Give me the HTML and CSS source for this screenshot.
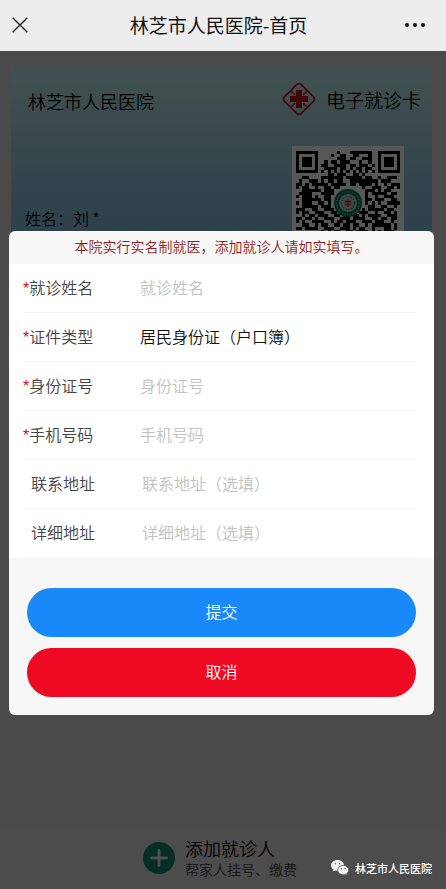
FILE: index.html
```html
<!DOCTYPE html>
<html lang="zh-CN">
<head>
<meta charset="utf-8">
<meta name="viewport" content="width=device-width, initial-scale=1">
<title>林芝市人民医院-首页</title>
<link rel="stylesheet" href="styles.css">
</head>
<body>
<header class="topbar">
  <button class="icon-button" type="button" aria-label="关闭">
    <svg width="16" height="16" viewBox="0 0 16 16" fill="none" stroke="#222" stroke-width="1.4"><path d="M.7 .7 15.3 15.3M15.3 .7.7 15.3"/></svg>
  </button>
  <h1 class="topbar-title">林芝市人民医院-首页</h1>
  <button class="icon-button icon-button-end" type="button" aria-label="更多">
    <svg width="20" height="6" viewBox="0 0 20 6" fill="#111"><circle cx="2" cy="3" r="2"/><circle cx="10" cy="3" r="2"/><circle cx="18" cy="3" r="2"/></svg>
  </button>
</header>
<div class="screen">
  <main class="home">
    <section class="card">
      <div class="card-head">
        <h2 class="card-hospital">林芝市人民医院</h2>
        <svg class="card-logo" width="34" height="34" viewBox="0 0 34 34" fill="none" stroke="#c8101c">
          <path d="M15 2.3Q17 .8 19 2.3L31.7 15Q33.200 17 31.700 19L19 31.700Q17 33.200 15 31.700L2.300 19Q.8 17 2.300 15Z" stroke-width="1.700"/>
          <path d="M8.500 8.500 13 13M25.500 8.500 21 13M8.500 25.500 13 21M25.500 25.500 21 21" stroke-width="1.500"/>
          <path d="M14 8h6v6h6v6h-6v6h-6v-6H8v-6h6z" fill="#c8101c" stroke="none"/>
        </svg>
        <span class="card-kind">电子就诊卡</span>
      </div>
      <div class="card-body">
        <p class="card-name">姓名：刘 *</p>
        <div class="qr">
          <svg id="qr" class="qr-code" viewBox="0 0 33 33" shape-rendering="crispEdges" role="img" aria-label="就诊二维码"></svg>
          <svg class="qr-badge" viewBox="0 0 28 28" fill="none">
            <circle cx="14" cy="14" r="14" fill="#007c57"/>
            <circle cx="14" cy="14" r="11.500" stroke="#6ba890" stroke-width="1.500" stroke-dasharray="1.500 1"/>
            <circle cx="14" cy="14" r="9" fill="#d2d2d2"/>
            <circle cx="14" cy="14" r="6.500" stroke="#64917f" stroke-width="1.500" stroke-dasharray="2 .7"/>
            <circle cx="14" cy="14" r="4" fill="#c99a9a"/>
            <path d="M14 10v8M11 12.500h6M11.500 15.500h5" stroke="#744" stroke-width="1"/>
          </svg>
        </div>
      </div>
    </section>
  </main>
  <footer class="add-bar">
    <a class="add-link" href="#add">
      <svg width="32" height="32" viewBox="0 0 32 32"><circle cx="16" cy="16" r="16" fill="#128769"/><path d="M16 8.500v15M8.500 16h15" stroke="#e6e6e6" stroke-width="2.800" stroke-linecap="round"/></svg>
      <span class="add-text"><span class="add-title">添加就诊人</span><span class="add-note">帮家人挂号、缴费</span></span>
    </a>
  </footer>
  <div class="overlay">
    <form class="dialog" role="dialog" aria-label="添加就诊人">
      <p class="notice">本院实行实名制就医，添加就诊人请如实填写。</p>
      <div class="fields">
        <div class="field"><label for="name"><b>*</b>就诊姓名</label><input id="name" type="text" placeholder="就诊姓名"></div>
        <div class="field"><label for="type"><b>*</b>证件类型</label><select id="type"><option>居民身份证（户口簿）</option></select></div>
        <div class="field"><label for="idno"><b>*</b>身份证号</label><input id="idno" type="text" placeholder="身份证号"></div>
        <div class="field"><label for="phone"><b>*</b>手机号码</label><input id="phone" type="tel" placeholder="手机号码"></div>
        <div class="field field-optional"><label for="area">联系地址</label><input id="area" type="text" placeholder="联系地址（选填）"></div>
        <div class="field field-optional"><label for="address">详细地址</label><input id="address" type="text" placeholder="详细地址（选填）"></div>
      </div>
      <div class="actions">
        <button class="action submit" type="button">提交</button>
        <button class="action cancel" type="button">取消</button>
      </div>
    </form>
  </div>
  <div class="watermark">
    <svg width="18" height="16" viewBox="0 0 18 16">
      <path fill="#f4f4f4" d="M6.500 0C2.900 0 0 2.400 0 5.400c0 1.700 1 3.200 2.400 4.200l-.6 2 2.200-1.200c.8.3 1.600.4 2.500.4C10 10.800 13 8.400 13 5.400S10.100 0 6.500 0z"/>
      <path fill="#f4f4f4" stroke="#505050" stroke-width=".8" d="M12.200 5.400c-3.100 0-5.500 2-5.500 4.700s2.400 4.700 5.500 4.700c.7 0 1.400-.1 2-.3l1.900 1.100-.5-1.800c1.300-.9 2.100-2.200 2.100-3.700 0-2.700-2.400-4.700-5.500-4.700z"/>
      <g fill="#505050"><circle cx="4.400" cy="3.800" r=".8"/><circle cx="8.600" cy="3.800" r=".8"/><circle cx="10.400" cy="8.800" r=".7"/><circle cx="14" cy="8.800" r=".7"/></g>
    </svg>
    <span>林芝市人民医院</span>
  </div>
</div>
<script src="qr.js"></script>
</body>
</html>
```
FILE: styles.css
```css
* { box-sizing: border-box; }
body {
  margin: 0;
  min-height: 100vh;
  display: flex;
  flex-direction: column;
  font-family: "Noto Sans CJK SC", sans-serif;
  font-weight: 350;
  font-size: 16px;
  color: #000;
}
h1, h2, p { margin: 0; font-weight: inherit; }
button, input, select { font: inherit; border: 0; margin: 0; }

.topbar {
  height: 51px;
  padding: 0 21px 2px 12px;
  display: grid;
  grid-template-columns: 60px 1fr 60px;
  align-items: center;
  background: #ededed;
  color: #111;
}
.icon-button { display: flex; padding: 0; background: none; }
.icon-button-end { justify-content: flex-end; }
.topbar-title { font-size: 19px; font-weight: 400; line-height: 28px; text-align: center; white-space: nowrap; }

.screen {
  position: relative;
  flex: 1;
  display: flex;
  flex-direction: column;
  background: #dadada;
}
.home { flex: 1; padding: 14px 14px 0 11px; }
.card {
  min-height: 250px;
  padding: 17px 11px 0 14px;
  background: linear-gradient(#c2ebe8, #8ac2dc 60%);
}
.card-head { display: flex; align-items: center; padding-left: 3px; }
.card-hospital { flex: 1; font-size: 18px; padding-top: 4px; }
.card-kind { margin-left: 10px; font-size: 19px; }
.card-body { display: flex; justify-content: space-between; padding: 30px 17px 0 0; }
.card-name { padding-top: 60px; line-height: 24px; }
.qr { display: grid; padding: 5px 4px; width: 112px; height: 112px; background: #fff; }
.qr-code, .qr-badge { grid-area: 1 / 1; }
.qr-code { width: 104px; height: 104px; fill: #000; }
.qr-badge { width: 28px; height: 28px; place-self: center; }

.add-bar { height: 62px; padding-right: 6px; display: flex; justify-content: center; background: #dfdfdf; }
.add-link { display: flex; align-items: center; gap: 10px; color: #000; text-decoration: none; }
.add-text { display: flex; flex-direction: column; }
.add-title { font-size: 18px; line-height: 22px; }
.add-note { font-size: 14px; line-height: 20px; color: #444; }

.overlay {
  position: absolute;
  inset: 0;
  padding: 180px 12px 0 9px;
  background: rgba(0, 0, 0, .66);
}
.dialog { overflow: hidden; border-radius: 6px; background: #f7f7f7; }
.notice { padding-bottom: 2px; line-height: 31px; font-size: 14px; text-align: center; color: #8f1c20; white-space: nowrap; }
.fields { background: #fff; }
.field {
  height: 49px;
  margin: 0 18px 0 14px;
  padding-bottom: 2px;
  display: grid;
  grid-template-columns: 117px 1fr;
  align-items: center;
  border-bottom: 1px solid #f5f5f5;
}
.field-optional { padding-left: 8px; grid-template-columns: 111px 1fr; }
.field label { color: #444; white-space: nowrap; }
.field b { color: #d80b16; font-weight: 400; font-family: "Liberation Sans", sans-serif; }
.field input, .field select {
  width: 100%;
  padding: 0;
  appearance: none;
  background: none;
  color: #111;
  outline: none;
}
.field input::placeholder { color: #c2c2c2; opacity: 1; }
.actions { display: flex; flex-direction: column; gap: 11px; padding: 30px 18px 18px; }
.action { height: 49px; padding-bottom: 4px; border-radius: 25px; color: #fff; }
.submit { background: #1989f9; }
.cancel { background: #ef0a24; }

.watermark {
  position: absolute;
  right: 14px;
  bottom: 13px;
  display: flex;
  align-items: center;
  gap: 6px;
  font-size: 11px;
  font-weight: 500;
  line-height: 16px;
  color: #fff;
}
```
FILE: qr.js
```js
// Module rows of the visit code; "X" is a dark module.
const rows = [
  "XXXXXXX......X...XXXXXXX..XXXXXXX",
  "X.....X....X..XX..XX...X..X.....X",
  "X.XXX.X......XXX.XX..XXX..X.XXX.X",
  "X.XXX.X..X.XX.XXX...X..X..X.XXX.X",
  "X.XXX.X.XX..XXXX.XX.XXX.X.X.XXX.X",
  "X.....X..XXXX.XX.X.XX.XX..X.....X",
  "XXXXXXX.X.X.X.X.X.X.X.X.X.XXXXXXX",
  "..........XX.XXX..XX.X...........",
  "..XX....XXXXXXX.XXXXX.XX..X..XXX.",
  ".X..XXX.X.XX.XX..XXXXXXXXX.XXX...",
  "XX.X.XXXXX.XXXXX.XX.XXXX.X..X.XXX",
  "X.XX..X..XX.XX.......X..XXX..XX.X",
  "..XXXXXX.XXX..........XXX.X.XX...",
  ".XXXX...XXXX..........X.XXXXX.XX.",
  "X.XXX.X..XX...........X..X..XXX..",
  "..XXXXXX.XX...........XX.XXX..XX.",
  "X.XXX..XX.X...........X.X.X..XXXX",
  "..XXXXX.XXX............XX..XX..X.",
  "XXX..XX..XXX.........X.XXXXX.XX..",
  "X.XX..XXX..XX.......XXX..X..XX.X.",
  "..X.XX.XXX..XX.XX.XX.X.XXXX..XXX.",
  "XX.XX.X..XXX..XXX.XXXX..XX.XX.XX.",
  "X.X..XXXX..X.XX.XXX..XXX.XXX..X..",
  "..XX..X.XX..XX.XX.XX..X.XXXXXX.X.",
  "XX.XXXX..XXX..XXX.X.XX..X...XX.X.",
  "........X.X.XX..XX.XXXX.X.X.XXX..",
  "XXXXXXX.XX.X.XX..XX.X...XXXXX.X..",
  "X.....X..XX.X.XXX..XX.XX..X.XX.X.",
  "X.XXX.X.X.XX..X.XX.XXX.X.XX..XX..",
  "X.XXX.X.XX..XXX..XX..XX.XX.XX..X.",
  "X.XXX.X..XXX.X.XX..XX.XX..XX.XX..",
  "X.....X.X..XX.XXX.X.XX..XX..X.XX.",
  "XXXXXXX.XX.X.XX..XXX..X.X.XX..X.."
];
let path = "";
rows.forEach((row, y) => {
  for (const run of row.matchAll(/X+/g)) {
    path += `M${run.index} ${y}h${run[0].length}v1h-${run[0].length}z`;
  }
});
const shape = document.createElementNS("http://www.w3.org/2000/svg", "path");
shape.setAttribute("d", path);
document.getElementById("qr").append(shape);
```
